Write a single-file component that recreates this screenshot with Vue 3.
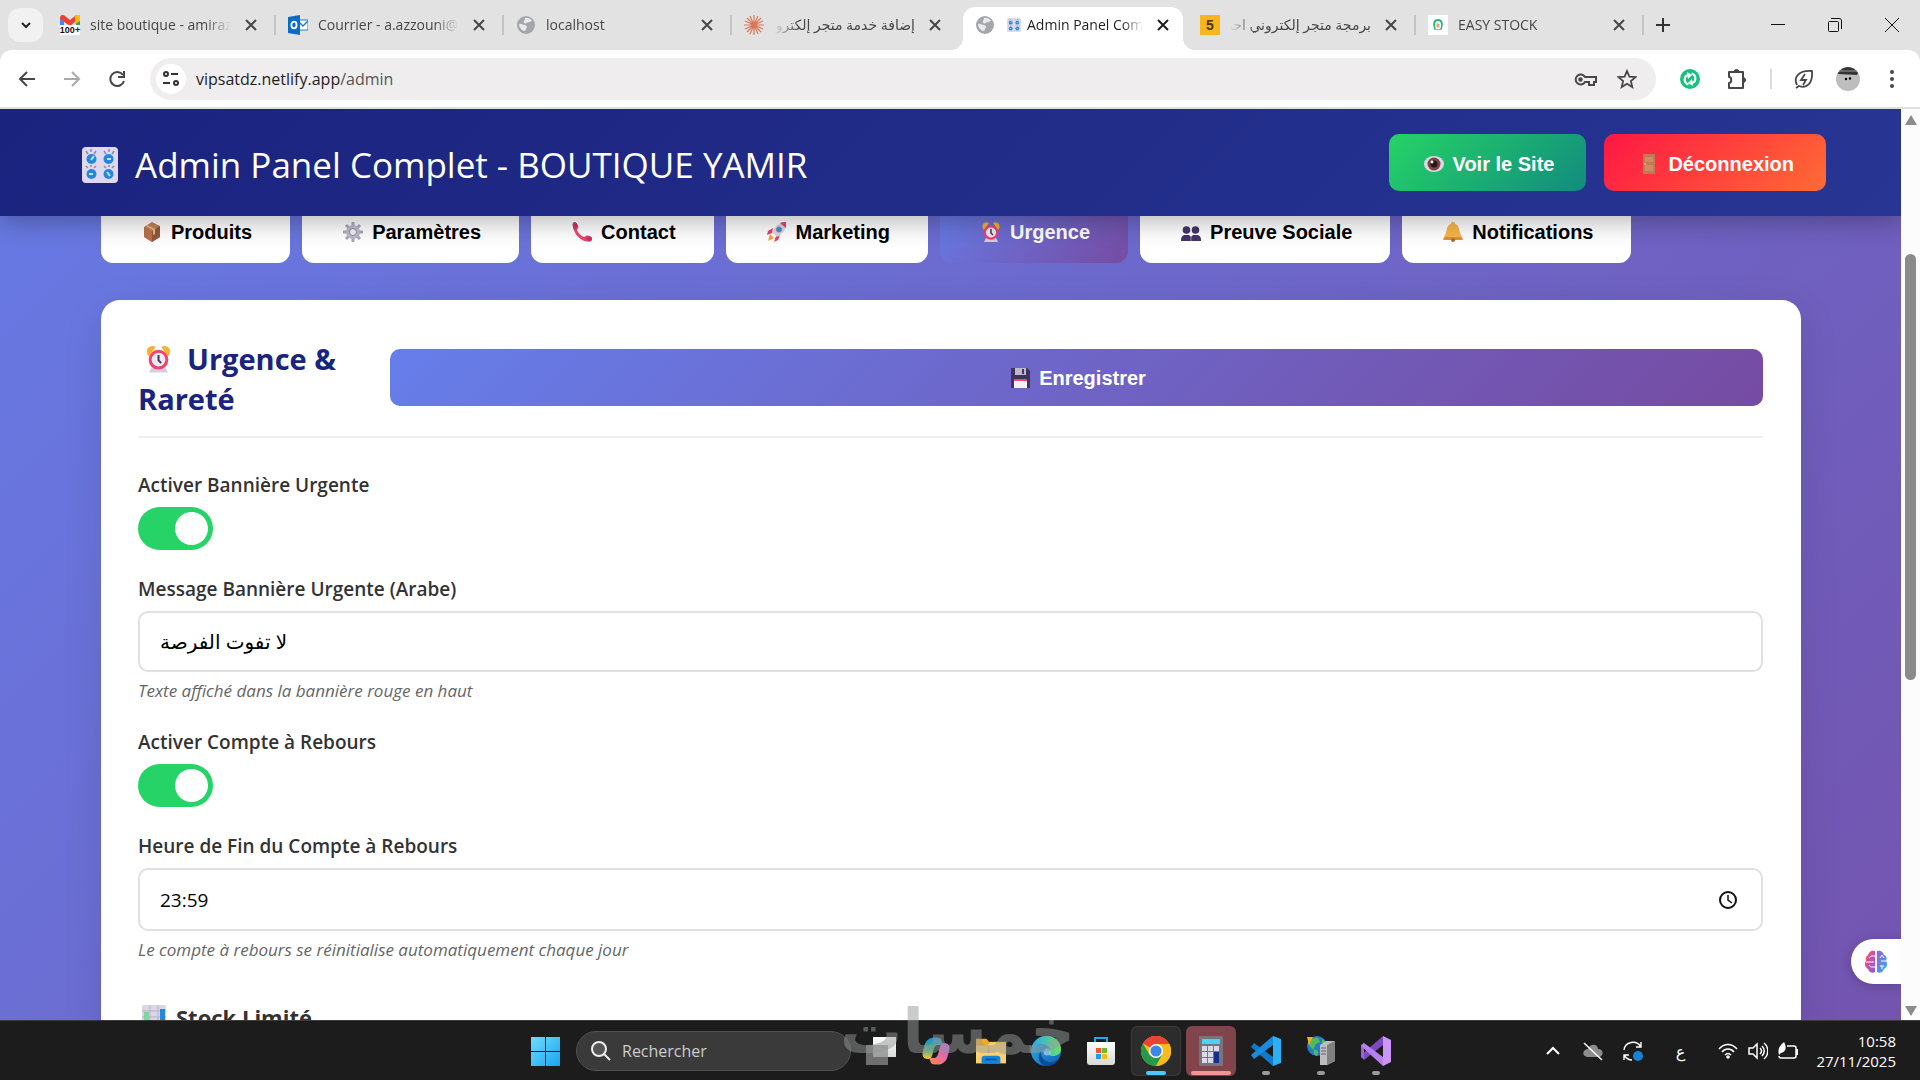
<script setup>
import { ref } from 'vue'

const browserTabs = [
  { id: 'mail', title: 'site boutique - amiraz', icon: 'gmail', badge: '100+' },
  { id: 'outlook', title: 'Courrier - a.azzouni@', icon: 'outlook' },
  { id: 'local', title: 'localhost', icon: 'globe' },
  { id: 'claude', title: 'إضافة خدمة متجر إلكتروني', icon: 'burst', rtl: true, last: true },
  { id: 'admin', title: 'Admin Panel Complet', icon: 'globe', extra: 'knobs', active: true },
  { id: 'five', title: 'برمجة متجر إلكتروني احترافي', icon: 'five', mark: '5', rtl: true },
  { id: 'stock', title: 'EASY STOCK', icon: 'easy' },
]

const sections = [
  { label: 'Produits', icon: 'box' },
  { label: 'Paramètres', icon: 'gear' },
  { label: 'Contact', icon: 'phone' },
  { label: 'Marketing', icon: 'rocket' },
  { label: 'Urgence', icon: 'alarm' },
  { label: 'Preuve Sociale', icon: 'people' },
  { label: 'Notifications', icon: 'bell' },
]
const current = ref('Urgence')

const bannerOn = ref(true)
const bannerText = ref('لا تفوت الفرصة')
const countdownOn = ref(true)
const endTime = ref('23:59')

const apps = [
  { name: 'Vue des tâches', icon: 'taskview' },
  { name: 'Copilot', icon: 'copilot' },
  { name: 'Explorateur', icon: 'folder' },
  { name: 'Edge', icon: 'edge' },
  { name: 'Store', icon: 'store' },
  { name: 'Chrome', icon: 'chrome', state: 'focused' },
  { name: 'Calculatrice', icon: 'calc', state: 'alert' },
  { name: 'VS Code', icon: 'vscode', state: 'open' },
  { name: 'IIS', icon: 'server', state: 'open' },
  { name: 'Visual Studio', icon: 'vs', state: 'open' },
]
</script>

<template>
  <svg class="sheet" aria-hidden="true">
    <defs>
      <linearGradient id="gEdge" x1="0" y1="0" x2="1" y2="1"><stop offset="0" stop-color="#2bb5e8" /><stop offset="1" stop-color="#0f5bb5" /></linearGradient>
      <linearGradient id="gEdge2" x1="0" y1="0" x2="1" y2="0"><stop offset="0" stop-color="#2aa9ee" /><stop offset="1" stop-color="#6be06a" /></linearGradient>
      <linearGradient id="gCopA" x1="0" y1="0" x2="0" y2="1"><stop offset="0" stop-color="#1e88e5" /><stop offset=".5" stop-color="#35b37e" /><stop offset="1" stop-color="#f6c445" /></linearGradient>
      <linearGradient id="gCopB" x1="1" y1="0" x2="0" y2="1"><stop offset="0" stop-color="#a764f0" /><stop offset=".5" stop-color="#ee6aa0" /><stop offset="1" stop-color="#f98a3c" /></linearGradient>
      <linearGradient id="gBrainA" x1="0" y1="0" x2="1" y2="1"><stop offset="0" stop-color="#fbb03b" /><stop offset=".3" stop-color="#ea4c89" /><stop offset="1" stop-color="#7b5cf5" /></linearGradient>
      <linearGradient id="gBrainB" x1="0" y1="0" x2="1" y2="1"><stop offset="0" stop-color="#a05be8" /><stop offset="1" stop-color="#1fb6e8" /></linearGradient>
      <linearGradient id="gWin" x1="0" y1="0" x2="1" y2="1"><stop offset="0" stop-color="#6fdcff" /><stop offset="1" stop-color="#18a4ee" /></linearGradient>
      <linearGradient id="gStore" x1="0" y1="0" x2="0" y2="1"><stop offset="0" stop-color="#ffffff" /><stop offset="1" stop-color="#d8d8d8" /></linearGradient>
    </defs>

    <symbol id="i-gmail" viewBox="0 0 20 20"><path d="M0 2h4v8H0z" fill="#4285f4" /><path d="M16 2h4v8h-4z" fill="#34a853" /><path d="M15 0h5v6l-5 3z" fill="#fbbc04" /><path d="M0 3c0-3 3-4 5-2l5 4 5-4v6l-5 4L0 4z" fill="#ea4335" /><rect y="10" width="20" height="10" fill="#fff" /></symbol>
    <symbol id="i-outlook" viewBox="0 0 20 20"><path d="M10 5h10v10H10z" fill="#fff" stroke="#1a7fd6" /><path d="m11 7 4 4 5-5" fill="none" stroke="#1a7fd6" stroke-width="1.5" /><path d="M0 2 12 0v20L0 18z" fill="#0a6cc8" /><ellipse cx="6" cy="10" rx="2.6" ry="3.3" fill="none" stroke="#fff" stroke-width="1.8" /></symbol>
    <symbol id="i-globe" viewBox="0 0 20 20"><circle cx="10" cy="10" r="9" fill="#a3a6ab" /><path d="M3 9c2-1 4 1 6 1 3 1 2 3 1 4 0 1-1 2-2 2-3-1-5-4-5-7zM9 3c3-1 6 1 7 3-2 0-2 2-4 1-1 1-2 2-4 1-1-2 1-2 1-5z" fill="#e8eaed" /></symbol>
    <symbol id="i-burst" viewBox="0 0 20 20"><path d="M10 0v20M0 10h20M3 3l14 14M17 3 3 17M6 1l8 18M14 1 6 19M1 6l18 8M1 14l18-8" stroke="#d97757" stroke-width="1.2" /></symbol>
    <symbol id="i-five" viewBox="0 0 20 20"><rect width="20" height="20" fill="#f9b51c" /></symbol>
    <symbol id="i-easy" viewBox="0 0 20 20"><rect width="20" height="20" fill="#fff" /><path d="M7 14c-2-5-1-9 3-9s5 4 3 9" fill="none" stroke="#28b57c" stroke-width="1.8" /><path d="M6 14.500h8M9 9h2v3H9z" fill="#d8b8a8" stroke="#e09a80" /></symbol>
    <symbol id="i-knobs" viewBox="0 0 36 36"><rect width="36" height="36" rx="4" fill="#ded9ee" /><g fill="#2487dd"><circle cx="9.500" cy="12" r="5" /><circle cx="26.500" cy="12" r="5" /><circle cx="9.500" cy="27" r="5" /><circle cx="26.500" cy="27" r="5" /></g><path d="M4 4l2 3M9 2v3M14 4l-2 3M22 4l2 3M27 2v3M32 4l-2 3M4 19l2 2M9 18v2M14 19l-2 2M22 19l2 2M27 18v2M32 19l-2 2" stroke="#93859f" stroke-width="1.5" /><path d="m9 13 3-4M25 12h4M7 27h4M25 25l3 4" stroke="#bce4ff" stroke-width="2" /></symbol>

    <symbol id="i-box" viewBox="0 0 20 20"><path d="m10 0 8 4v11l-8 5-8-5V5z" fill="#c5835a" /><path d="m10 9 8-5v11l-8 5z" fill="#95573d" /><path d="m2 5 8 4v11l-8-5z" fill="#b9724c" /><path d="m5 3 8 4v5l-2 1V8L4 4z" fill="#edb78b" /></symbol>
    <symbol id="i-gear" viewBox="0 0 20 20"><g stroke="#aaa7bd" stroke-width="3"><path d="M10 0v20M0 10h20M3 3l14 14M17 3 3 17" /></g><circle cx="10" cy="10" r="7" fill="#bcb9cd" /><circle cx="10" cy="10" r="3.500" fill="#f4f4f8" stroke="#8f8ca1" /></symbol>
    <symbol id="i-phone" viewBox="0 0 20 20"><path d="M1 1c2-2 4 0 5 3 1 2-1 3-1 4 1 3 4 6 7 7 2-1 3-2 5-1 3 2 4 3 2 5-8 3-19-7-18-18z" fill="#f04370" /><path d="M1 1c2-2 4 0 5 3L2 8C1 5 0 3 1 1zM14 16l4-2c3 2 3 3 1 5-2 1-4 0-5-3z" fill="#c73668" /></symbol>
    <symbol id="i-rocket" viewBox="0 0 20 20"><path d="M6 6 1 9l-1 4 5-2zM13 13l-2 5-4 2 2-6z" fill="#ee3e68" /><path d="m3 12-2 7 6-3z" fill="#ffa033" /><path d="M19 0c1 6-2 11-9 15l-5-5C8 4 13 0 19 0z" fill="#d9d7e4" /><path d="M19 0v6l-6-5c2-1 4-1 6-1z" fill="#ee3e68" /><circle cx="12" cy="7.500" r="2.600" fill="#3493de" stroke="#8d8aa8" /></symbol>
    <symbol id="i-alarm" viewBox="0 0 20 20"><path d="M2 7C0 2 4-1 8 1L3 8zM18 7c2-5-2-8-6-6l5 7z" fill="#f9b02d" /><path d="m5 16-2 4h14l-2-4z" fill="#d3cee2" /><circle cx="10" cy="10.500" r="6.200" fill="#eee9f4" stroke="#f2416b" stroke-width="2.200" /><path d="M10 7v4l2 2" fill="none" stroke="#443a58" stroke-width="1.500" /></symbol>
    <symbol id="i-people" viewBox="0 0 20 20"><g fill="#443469"><circle cx="5.500" cy="8" r="3.800" /><circle cx="14.500" cy="8" r="3.800" /><path d="M0 19c0-4 1-5 3-6h5l2 2 2-2h5c2 1 3 2 3 6z" /></g><path d="M10 14v5" stroke="#9488b5" /></symbol>
    <symbol id="i-bell" viewBox="0 0 20 20"><path d="M8 2c0-3 4-3 4 0 4 1 4 5 5 9l3 6H0l3-6c1-4 1-8 5-9z" fill="#f9b649" /><path d="M2 15h16l2 3H0z" fill="#dd943a" /><circle cx="10" cy="18" r="2" fill="#a96935" /></symbol>
    <symbol id="i-eye" viewBox="0 0 20 20"><ellipse cx="10" cy="10" rx="10" ry="8" fill="#ddd8e8" /><circle cx="10" cy="10" r="6.500" fill="#7d4540" /><circle cx="10" cy="10" r="3.500" fill="#21191f" /><circle cx="8" cy="8" r="1.400" fill="#fff" /></symbol>
    <symbol id="i-door" viewBox="0 0 20 20"><path d="M4 0h12v20H4z" fill="#c27a55" /><path d="M6 3h8v5H6zM6 11h8v6H6z" fill="#cf8b63" /><circle cx="6" cy="10" r="1" fill="#fbc44a" /></symbol>
    <symbol id="i-floppy" viewBox="0 0 20 20"><path d="M1 0h16l3 3v17H1z" fill="#40345c" /><path d="M5 0h11v7H5z" fill="#bdb8cb" /><path d="M12 1h2v5h-2z" fill="#40345c" /><path d="M4 11h13v9H4z" fill="#f4f1f8" /><path d="M4 11h13v2H4z" fill="#ee4b70" /></symbol>
    <symbol id="i-chart" viewBox="0 0 24 24"><rect width="24" height="24" rx="2" fill="#dad6e6" /><path d="M0 6h24M0 12h24M8 0v24M16 0v24" stroke="#b7b2c6" /><path d="M2 7h5v17H2z" fill="#7fd6a0" /><path d="M9 15h6v9H9z" fill="#e9366b" /><path d="M18 4h5v20h-5z" fill="#208add" /></symbol>

    <symbol id="i-taskview" viewBox="0 0 30 30"><path d="M7 1h23v20H7z" fill="url(#gStore)" /><path d="M0 9h22v20H0z" fill="#8b8b8b" opacity=".75" /></symbol>
    <symbol id="i-copilot" viewBox="0 0 30 30"><path d="M8 3c2-2 10-2 12 0l2 6h-5c-3 0-4 3-5 7-1 5-2 7-5 7-7 0-6-6-4-12 1-4 2-6 5-8z" fill="url(#gCopA)" /><path d="M22 27c-2 2-10 2-12 0l-2-5h5c3 0 4-3 5-7 1-5 2-8 5-8 7 0 6 6 4 12-1 4-2 6-5 8z" fill="url(#gCopB)" /></symbol>
    <symbol id="i-folder" viewBox="0 0 32 30"><path d="M0 2h11l3 3h18v23H0z" fill="#f3a91f" /><path d="M0 9h12l3-3h17v22H0z" fill="#ffd06f" /><path d="M6 28v-5c0-2 1-3 3-3h14c2 0 3 1 3 3v5z" fill="#1584dc" /><path d="M10 24h12" stroke="#075aa9" stroke-width="2" /></symbol>
    <symbol id="i-edge" viewBox="0 0 30 30"><circle cx="15" cy="15" r="15" fill="url(#gEdge)" /><path d="M1 12C4 3 10 0 16 0c9 0 14 7 14 13 0 5-4 7-8 7-5 0-4-2-3-5 0-4-4-7-9-7-4 0-7 2-9 4z" fill="url(#gEdge2)" /><path d="M10 15c-1 7 5 12 12 11l5-2c-3 5-9 6-12 6C9 29 5 21 10 15z" fill="#0d4a9c" /><circle cx="16" cy="16" r="3.500" fill="#e8f6ff" opacity=".5" /></symbol>
    <symbol id="i-store" viewBox="0 0 30 30"><path d="M9 7V2h12v5" fill="none" stroke="#22a7ee" stroke-width="2" /><path d="M1 6h28v20c0 2-1 3-3 3H4c-2 0-3-1-3-3z" fill="url(#gStore)" /><path d="M10 12h5v5h-5z" fill="#f2553a" /><path d="M16 12h5v5h-5z" fill="#75b82f" /><path d="M10 18h5v5h-5z" fill="#1d9fe8" /><path d="M16 18h5v5h-5z" fill="#fbb914" /></symbol>
    <symbol id="i-chrome" viewBox="0 0 30 30"><circle cx="15" cy="15" r="15" fill="#fbbc1b" /><path d="M15 15 2 7.500a15 15 0 0 1 26 0z" fill="#ea4335" /><path d="M2 7.500 15 30A15 15 0 0 1 2 7.500z" fill="#23994b" /><path d="M15 30l6.500-11L12 20 8.500 19z" fill="#23994b" /><path d="M14 8h14.400a15 15 0 0 1-13.400 22l6-11z" fill="#fbbc1b" /><circle cx="15" cy="15" r="7" fill="#fff" /><circle cx="15" cy="15" r="5.600" fill="#3b87e8" /></symbol>
    <symbol id="i-calc" viewBox="0 0 24 30"><rect width="24" height="30" rx="1" fill="#76757c" /><path d="M3 3h18v5H3z" fill="#4fd0f6" /><g fill="#dadae6"><path d="M3 10h5v5H3zM9 10h5v5H9zM15 10h5v5h-5zM3 16h5v5H3zM9 16h5v5H9zM3 22h5v5H3zM9 22h5v5H9z" /></g><path d="M15 16h5v11h-5z" fill="#173090" /></symbol>
    <symbol id="i-vscode" viewBox="0 0 30 30"><path d="M22 21v9L0 11l3-4z" fill="#1079c9" /><path d="M22 0 0 19l3 4L22 9z" fill="#198ade" /><path d="m22 0 8 3v24l-8 3z" fill="#2bb0f3" /></symbol>
    <symbol id="i-server" viewBox="0 0 30 30"><circle cx="11" cy="10" r="10" fill="#287ad0" /><path d="M2 8c3-6 7-7 10-6l2 4-4 2-3 6zM8 14c4-1 5 2 3 6-2 0-4-3-3-6zM16 3c3 1 4 4 4 6l-4-1z" fill="#52bb52" /><path d="M1 1h6L3 9z" fill="#f6a92d" /><path d="m14 9 6-4h9v20l-8 4h-7z" fill="#bdbdbd" /><path d="m21 9 8-4v20l-8 4z" fill="#808080" /><path d="M15 12h5M15 15h5M15 18h5" stroke="#666" /></symbol>
    <symbol id="i-vs" viewBox="0 0 30 30"><path d="M22 0v9L3 24l-3-3V19z" fill="#7d4ac2" /><path d="M0 9v12l3 2V7z" fill="#9a63d8" /><path d="m0 10 3-3 19 14v9z" fill="#b681ef" /><path d="m22 0 8 4v22l-8 4z" fill="#cb96f8" /></symbol>
  </svg>

  <div class="desktop">
    <header class="strip">
      <button class="tab-search" aria-label="Rechercher dans les onglets"><svg viewBox="0 0 12 12" width="12" height="12"><path d="m2 4 4 4 4-4" fill="none" stroke="#222" stroke-width="2" /></svg></button>
      <div class="tabs">
        <div v-for="t in browserTabs" :key="t.id" class="tab" :class="{ active: t.active, plain: t.last }">
          <span class="favicon">
            <svg width="20" height="20"><use :href="'#i-' + t.icon" /></svg>
            <b v-if="t.badge" class="badge">{{ t.badge }}</b>
            <b v-if="t.mark" class="mark">{{ t.mark }}</b>
          </span>
          <svg v-if="t.extra" class="extra"><use :href="'#i-' + t.extra" /></svg>
          <span class="tab-title" :class="{ rtl: t.rtl }" :dir="t.rtl ? 'rtl' : 'ltr'">{{ t.title }}</span>
          <button class="tab-close" aria-label="Fermer"><svg viewBox="0 0 12 12" width="12" height="12"><path d="m1 1 10 10M11 1 1 11" stroke="currentColor" stroke-width="2" /></svg></button>
        </div>
      </div>
      <button class="new-tab" aria-label="Nouvel onglet"><svg viewBox="0 0 14 14" width="14" height="14"><path d="M7 0v14M0 7h14" stroke="#333" stroke-width="2" /></svg></button>
      <div class="window-buttons">
        <button aria-label="Réduire"><svg viewBox="0 0 14 14" width="14" height="14"><path d="M0 6.500h14" stroke="#111" /></svg></button>
        <button aria-label="Restaurer"><svg viewBox="0 0 14 14" width="14" height="14"><g fill="none" stroke="#111"><rect x=".5" y="3.500" width="10" height="10" rx="1" /><path d="M3 .5h8c2 0 2.500 1 2.500 2.500v8" /></g></svg></button>
        <button aria-label="Fermer la fenêtre"><svg viewBox="0 0 14 14" width="14" height="14"><path d="m0 0 14 14M14 0 0 14" stroke="#111" /></svg></button>
      </div>
    </header>

    <div class="toolbar">
      <div class="nav-buttons">
        <button aria-label="Retour"><svg viewBox="0 0 20 20"><path d="M18 10H3m7-7-7 7 7 7" fill="none" stroke="#474747" stroke-width="2" /></svg></button>
        <button aria-label="Suivant"><svg viewBox="0 0 20 20"><path d="M2 10h15m-7-7 7 7-7 7" fill="none" stroke="#a9a9a9" stroke-width="2" /></svg></button>
        <button aria-label="Actualiser"><svg viewBox="0 0 20 20"><path d="M16 6a7 7 0 1 0 1 6M17 2v6h-6" fill="none" stroke="#474747" stroke-width="2" /></svg></button>
      </div>
      <div class="omnibox">
        <button class="tune" aria-label="Informations du site"><svg viewBox="0 0 18 18" width="18" height="18"><g fill="none" stroke="#333" stroke-width="2"><circle cx="4" cy="4" r="2" /><path d="M9 4h7M1 13h7" /><circle cx="14" cy="13" r="2" /></g></svg></button>
        <div class="url"><span>vipsatdz.netlify.app</span>/admin</div>
        <button aria-label="Mots de passe"><svg viewBox="0 0 24 20" width="24" height="20"><g fill="none" stroke="#474747" stroke-width="2"><path d="M12 8a5 5 0 1 0 0 5h4v3h5v-3h2V8z" /></g><circle cx="7.500" cy="10.500" r="2.200" fill="#474747" /></svg></button>
        <button aria-label="Favori"><svg viewBox="0 0 20 20" width="20" height="20"><path d="m10 2 2.400 5.600 6.100.5-4.600 4 1.400 5.900-5.300-3.200L4.700 18l1.400-5.900-4.600-4 6.100-.5z" fill="none" stroke="#474747" stroke-width="1.800" /></svg></button>
      </div>
      <div class="extensions">
        <button class="sync-ext" aria-label="Extension"><svg viewBox="0 0 20 20" width="20" height="20"><circle cx="10" cy="10" r="10" fill="#15c27c" /><path d="M8.500 15.500C3 14 4 7 8 6m3.500-1.500C17 6 16 13 12 14" fill="none" stroke="#fff" stroke-width="2.200" /><path d="m7 3 5 3-4 4zM13 17l-5-3 4-4z" fill="#fff" /></svg></button>
        <button aria-label="Extensions"><svg viewBox="0 0 22 22" width="22" height="22"><path d="M3 4h14v16H3v-5c3 0 3-6 0-6z" fill="none" stroke="#474747" stroke-width="2" stroke-linejoin="round" /><path d="M8 4a2 2 0 0 1 5 0zM17 9.500a2.500 2.500 0 0 1 0 5z" fill="#474747" stroke="#474747" /></svg></button>
        <span class="rule"></span>
        <button aria-label="Économie d'énergie"><svg viewBox="0 0 20 20" width="20" height="20"><path d="M3 16C-1 8 5 1 18 2c1 12-5 18-13 15l-3 2m9-14-4 6h5l-3 5" fill="none" stroke="#474747" stroke-width="1.800" /></svg></button>
        <button class="avatar" aria-label="Profil"><svg viewBox="0 0 24 24" width="24" height="24"><circle cx="12" cy="12" r="12" fill="#bdbdbd" /><path d="M2 6C7-2 17-2 22 6l-1 2-19-1z" fill="#343434" /><path d="M3 4h18" stroke="#999" /><circle cx="10" cy="12" r="1.200" /><circle cx="14" cy="11.500" r="1.200" /></svg></button>
        <button aria-label="Menu"><svg viewBox="0 0 20 20" width="20" height="20" fill="#474747"><circle cx="10" cy="3" r="2" /><circle cx="10" cy="10" r="2" /><circle cx="10" cy="17" r="2" /></svg></button>
      </div>
    </div>

    <div class="viewport">
      <div class="page">
        <header class="hero">
          <h1><svg class="hero-icon"><use href="#i-knobs" /></svg>Admin Panel Complet - BOUTIQUE YAMIR</h1>
          <div class="hero-actions">
            <button class="btn green"><svg class="emoji"><use href="#i-eye" /></svg>Voir le Site</button>
            <button class="btn red"><svg class="emoji"><use href="#i-door" /></svg>Déconnexion</button>
          </div>
        </header>

        <nav class="sections">
          <button v-for="s in sections" :key="s.label" :class="{ current: current === s.label }" @click="current = s.label">
            <svg class="emoji"><use :href="'#i-' + s.icon" /></svg>{{ s.label }}
          </button>
        </nav>

        <main class="card">
          <div class="card-head">
            <h2><svg class="title-icon"><use href="#i-alarm" /></svg>Urgence &amp; Rareté</h2>
            <button class="btn save"><svg class="emoji"><use href="#i-floppy" /></svg>Enregistrer</button>
          </div>

          <div class="group">
            <label for="banner">Activer Bannière Urgente</label>
            <input id="banner" v-model="bannerOn" class="switch" type="checkbox">
          </div>
          <div class="group">
            <label for="message">Message Bannière Urgente (Arabe)</label>
            <input id="message" v-model="bannerText" class="field" type="text">
            <p>Texte affiché dans la bannière rouge en haut</p>
          </div>
          <div class="group">
            <label for="countdown">Activer Compte à Rebours</label>
            <input id="countdown" v-model="countdownOn" class="switch" type="checkbox">
          </div>
          <div class="group">
            <label for="end">Heure de Fin du Compte à Rebours</label>
            <div class="field time">
              <input id="end" v-model="endTime" type="text">
              <button aria-label="Choisir l'heure"><svg viewBox="0 0 18 18" width="18" height="18"><g fill="none" stroke="#111" stroke-width="2"><circle cx="9" cy="9" r="8" /><path d="M9 4v5l4 3" stroke-width="1.500" /></g></svg></button>
            </div>
            <p>Le compte à rebours se réinitialise automatiquement chaque jour</p>
          </div>
          <h3><svg class="chart-icon"><use href="#i-chart" /></svg>Stock Limité</h3>
        </main>

        <button class="brain" aria-label="Assistant"><svg viewBox="0 0 24 24" width="24" height="24"><path d="M11 1C7 0 5 2 4 5c-2 1-3 4-2 6-2 3-1 6 2 8 1 3 4 5 7 3z" fill="url(#gBrainA)" /><path d="M13 1c4-1 6 1 7 4 3 1 3 4 2 6 2 3 1 6-2 8-1 3-4 5-7 3z" fill="url(#gBrainB)" /><path d="M11 6H7L5 8M2 12h8M11 17H7l-2-2M16 8l2-3 2 3M16 16h4m-2 0v3M17 11h5" fill="none" stroke="#fff" /></svg></button>
      </div>
      <div class="scrollbar" aria-hidden="true">
        <i class="arrow up"></i>
        <div class="track"><i class="thumb"></i></div>
        <i class="arrow down"></i>
      </div>
    </div>

    <footer class="taskbar">
      <div class="dock">
        <button class="app" aria-label="Démarrer"><svg viewBox="0 0 30 30" width="30" height="30" fill="url(#gWin)"><path d="M0 1h14v14H0zM15 1h14v14H15zM0 16h14v14H0zM15 16h14v14H15z" /></svg></button>
        <label class="search">
          <svg viewBox="0 0 20 20" width="20" height="20"><circle cx="8" cy="8" r="7" fill="#555" stroke="#eee" stroke-width="2" /><path d="m13 13 6 6" stroke="#eee" stroke-width="2" /></svg>
          <input type="search" placeholder="Rechercher" aria-label="Rechercher">
        </label>
        <button v-for="a in apps" :key="a.name" class="app" :class="a.state" :aria-label="a.name">
          <svg width="30" height="30"><use :href="'#i-' + a.icon" /></svg>
        </button>
      </div>
      <div class="tray">
        <svg class="chev" viewBox="0 0 14 14" width="14" height="14"><path d="m1 10 6-6 6 6" fill="none" stroke="#fff" stroke-width="2" /></svg>
        <svg class="cloud" viewBox="0 0 20 20" width="20" height="20"><path d="M4 16c-6-1-4-8 1-8 2-6 10-5 10 0 6 0 6 7 1 8z" fill="#8d8d8d" /><path d="m1 2 18 17" stroke="#fff" stroke-width="1.500" /></svg>
        <svg class="sync" viewBox="0 0 20 20" width="20" height="20"><path d="M1 9C2 1 13-2 18 6m0-5v5h-5M1 19v-5h5m-5 0c2 3 4 5 8 5" fill="none" stroke="#fff" stroke-width="1.400" /><circle cx="15" cy="15" r="5" fill="#1583d8" /></svg>
        <span class="lang">ع</span>
        <div class="status">
          <svg viewBox="0 0 20 16" width="20" height="16"><g fill="none" stroke="#fff" stroke-width="1.500"><path d="M1 6c5-6 13-6 18 0M4 9c3-4 9-4 12 0M7 12c2-2 4-2 6 0" /></g><circle cx="10" cy="14" r="1.800" fill="#fff" /></svg>
          <svg viewBox="0 0 20 18" width="20" height="18"><g fill="none" stroke="#fff" stroke-width="1.500"><path d="M1 6h4l4-4v14l-4-4H1zM12 6c2 2 2 4 0 6M14 4c3 3 3 7 0 10M16 1c5 4 5 12 0 16" /></g></svg>
          <svg viewBox="0 0 20 18" width="20" height="18"><path d="M9 4h7c1 0 2 1 2 2v8c0 1-1 2-2 2H3c-1 0-2-1-2-2" fill="none" stroke="#fff" stroke-width="1.500" /><path d="M1 13C-1 6 3 3 6 0c3 5 2 10-3 11zM18 7h2v6h-2z" fill="#fff" /></svg>
        </div>
        <div class="clock"><span>10:58</span><span>27/11/2025</span></div>
      </div>
    </footer>
    <div class="watermark" dir="rtl">خمسات</div>
  </div>
</template>

<style>
body { margin: 0; overflow: hidden; }
</style>

<style scoped>
* { box-sizing: border-box; }
.sheet { position: absolute; width: 0; height: 0; }
button { border: 0; padding: 0; background: none; color: inherit; font: inherit; cursor: pointer; }
button svg { display: block; }
h1, h2, h3, p { margin: 0; }
input { font: inherit; outline: 0; }

.desktop { position: relative; display: flex; flex-direction: column; height: 100vh; background: #e2e2e2; font-family: "Open Sans", "DejaVu Sans", sans-serif; color: #333; }

.strip { display: flex; flex: none; height: 50px; padding-left: 8px; }
.tab-search { display: grid; place-items: center; width: 35px; height: 34px; margin-top: 8px; border-radius: 12px; background: #f1f1f1; }
.tabs { display: flex; margin-left: 4px; }
.tab { position: relative; display: flex; align-items: center; width: 228px; height: 50px; padding: 0 12px 0 13px; color: #474747; }
.tab::after { content: ""; position: absolute; right: -1px; top: 15px; width: 2px; height: 20px; background: #c4c4c4; }
.tab.active::after, .tab.plain::after { display: none; }
.tab.active { width: 220px; height: 43px; margin: 7px 4px 0 4px; padding: 0 14px 7px 12px; border-radius: 12px 12px 0 0; background: #fff; color: #1f1f1f; }
.tab.active::before { content: ""; position: absolute; left: -12px; right: -12px; bottom: 0; height: 12px; background: radial-gradient(circle at 0 0, transparent 12px, #fff 12px) left / 12px 12px no-repeat, radial-gradient(circle at 100% 0, transparent 12px, #fff 12px) right / 12px 12px no-repeat; }
.favicon { position: relative; flex: none; width: 20px; height: 20px; }
.favicon svg { display: block; }
.badge, .mark { position: absolute; left: 50%; transform: translateX(-50%); font-family: "Liberation Sans", sans-serif; }
.badge { bottom: 0; font-size: 9px; line-height: 10px; color: #111; }
.mark { top: 2px; font-size: 14px; line-height: 16px; color: #473413; }
.extra { width: 14px; height: 14px; flex: none; margin-left: 12px; }
.tab-title { flex: 1; height: 24px; margin: 0 14px 0 10px; overflow: hidden; white-space: nowrap; font-size: 14px; line-height: 24px; mask-image: linear-gradient(to right, #000 82%, transparent); }
.tab-title.rtl { mask-image: linear-gradient(to left, #000 82%, transparent); }
.tab.active .tab-title { margin-left: 6px; }
.tab-close { margin-right: 6px; }
.tab.active .tab-close { margin-right: 0; }
.new-tab { margin-left: 7px; width: 26px; display: grid; place-items: center; }
.window-buttons { display: flex; margin-left: auto; }
.window-buttons button { width: 57px; display: grid; place-items: center; }

.toolbar { display: flex; align-items: center; height: 59px; flex: none; padding: 1px 18px 0 17px; border-bottom: 2px solid #dfe1e0; border-radius: 12px 12px 0 0; background: #fff; }
.nav-buttons { display: flex; gap: 25px; width: 133px; }
.nav-buttons svg { width: 20px; height: 20px; }
.omnibox { display: flex; align-items: center; flex: 1; gap: 20px; height: 42px; padding: 0 19px 0 6px; border-radius: 21px; background: #efedee; }
.tune { display: grid; place-items: center; width: 30px; height: 30px; border-radius: 50%; background: #fff; }
.url { flex: 1; margin-left: -10px; font-size: 16px; color: #555; }
.url span { color: #1f1f1f; }
.extensions { display: flex; align-items: center; gap: 22px; margin-left: 24px; }
.extensions .rule { width: 2px; height: 20px; background: #dadada; }
.sync-ext { margin-right: 4px; }

.viewport { display: flex; flex: 1; min-height: 0; overflow: hidden; }
.page { position: relative; flex: 1; min-width: 0; overflow: hidden; background: linear-gradient(135deg, #667eea, #764ba2) 0 28% / 100% 204%; }
.hero { position: relative; z-index: 1; display: flex; align-items: center; justify-content: space-between; height: 107px; padding: 0 75px 0 82px; background: linear-gradient(135deg, #1a237e, #283593); box-shadow: 0 5px 25px rgba(0, 0, 0, .3); color: #fff; }
h1 { display: flex; align-items: center; gap: 17px; padding-top: 4px; font-size: 35px; line-height: 48px; font-weight: 400; }
.hero-icon { width: 36px; height: 36px; }
.hero-actions { display: flex; gap: 18px; }
.btn, .sections button { display: flex; align-items: center; justify-content: center; font: bold 20px/24px "Liberation Sans", sans-serif; }
.btn { height: 57px; padding: 2px 32px 0; border-radius: 10px; color: #fff; }
.emoji { width: 20px; height: 20px; margin: 0 9px 0 3px; flex: none; }
.green { background: linear-gradient(135deg, #25d366, #128c7e); }
.red { background: linear-gradient(135deg, #ff1744, #ff6b35); }
.sections { display: flex; gap: 12px; margin: -16px 100px 0 101px; }
.sections button { height: 63px; padding: 0 38px; border-radius: 12px; background: #fff; color: #000; }
.sections button.current { background: linear-gradient(135deg, #667eea, #764ba2); color: #fff; }

.card { margin: 37px 100px 0 101px; padding: 35px 38px 38px 37px; border-radius: 19px; background: #fff; box-shadow: 0 10px 40px rgba(0, 0, 0, .1); }
.card-head { display: flex; align-items: center; padding-bottom: 17px; margin-bottom: 35px; border-bottom: 2px solid #f0f0f0; }
h2 { width: 252px; flex: none; padding: 4px 40px 0 0; font-size: 29px; line-height: 40px; font-weight: 700; color: #1a237e; }
.title-icon { width: 27px; height: 30px; margin: 0 15px 0 7px; vertical-align: -4px; }
.save { flex: 1; background: linear-gradient(135deg, #667eea, #764ba2); }
.group { display: flex; flex-direction: column; margin-bottom: 27px; }
.group label { margin-bottom: 10px; font-size: 19px; line-height: 24px; font-weight: 600; }
.switch { appearance: none; display: flex; align-items: center; justify-content: flex-end; width: 75px; height: 43px; margin: 0; padding-right: 5px; border-radius: 22px; background: #ccc; cursor: pointer; }
.switch::before { content: ""; width: 33px; height: 33px; border-radius: 50%; background: #fff; }
.switch:not(:checked) { justify-content: flex-start; padding-left: 5px; }
.switch:checked { background: #25d366; }
.field { width: 100%; height: 61px; padding: 0 20px; border: 2px solid #e0e0e0; border-radius: 10px; background: #fff; color: #000; font-size: 20px; }
.time { display: flex; align-items: center; height: 63px; padding-right: 24px; font-size: 19px; }
.time input { flex: 1; min-width: 0; border: 0; padding: 0; background: none; color: inherit; }
.group p { margin-top: 7px; font-size: 17px; line-height: 24px; font-style: italic; color: #666; }
h3 { display: flex; align-items: center; gap: 10px; margin-top: 40px; padding-left: 4px; font-size: 22px; line-height: 30px; font-weight: 700; }
.chart-icon { width: 24px; height: 24px; }
.brain { position: absolute; right: 0; bottom: 36px; display: flex; align-items: center; width: 50px; height: 45px; padding-left: 13px; border-radius: 23px 0 0 23px; background: #fff; box-shadow: 0 2px 12px rgba(0, 0, 0, .2); }
.scrollbar { display: flex; flex-direction: column; align-items: center; width: 19px; padding: 6px 0 4px; background: #fcfcfc; }
.arrow { border: 6px solid transparent; }
.up { border-top: 0; border-bottom: 10px solid #8b8b8b; }
.down { border-bottom: 0; border-top: 10px solid #8b8b8b; }
.track { flex: 1; width: 11px; }
.thumb { display: block; position: relative; top: 14.6%; height: 48.4%; border-radius: 6px; background: #8b8b8b; }

.taskbar { position: relative; display: flex; align-items: center; justify-content: center; flex: none; height: 60px; border-top: 1px solid #3c3c3c; background: #1c1c1c; color: #fff; }
.dock { display: flex; align-items: center; gap: 5px; padding-left: 2px; }
.app { position: relative; display: grid; place-items: center; width: 50px; height: 50px; border-radius: 6px; }
.focused { background: #2c2c2c; box-shadow: inset 0 0 0 1px #393939; }
.alert { background: #81444a; }
.open::after, .focused::after, .alert::after { content: ""; position: absolute; bottom: 1px; width: 8px; height: 4px; border-radius: 2px; background: #9a9a9a; }
.focused::after { width: 20px; background: #4cc9fb; }
.alert::after { width: 40px; background: #f59497; }
.search { display: flex; align-items: center; gap: 11px; width: 275px; height: 40px; padding: 0 14px; border: 1px solid #505050; border-radius: 20px; background: #3a3a3a; }
.search input { flex: 1; min-width: 0; padding: 0; border: 0; background: none; color: #fff; font-size: 16px; }
.search input::placeholder { color: #ccc; opacity: 1; }
.tray { position: absolute; right: 24px; top: 0; bottom: 0; display: flex; align-items: center; }
.chev { margin-right: 23px; }
.cloud, .sync { margin-right: 20px; }
.lang { width: 35px; text-align: center; font-size: 16px; }
.status { display: flex; align-items: center; gap: 10px; margin: 0 12px 0 20px; }
.clock { display: flex; flex-direction: column; align-items: flex-end; width: 86px; font-size: 15px; line-height: 20px; }
.watermark { position: absolute; right: 845px; bottom: 8px; font: bold 62px/80px "DejaVu Sans", sans-serif; color: rgba(150, 154, 154, .5); pointer-events: none; }
</style>
